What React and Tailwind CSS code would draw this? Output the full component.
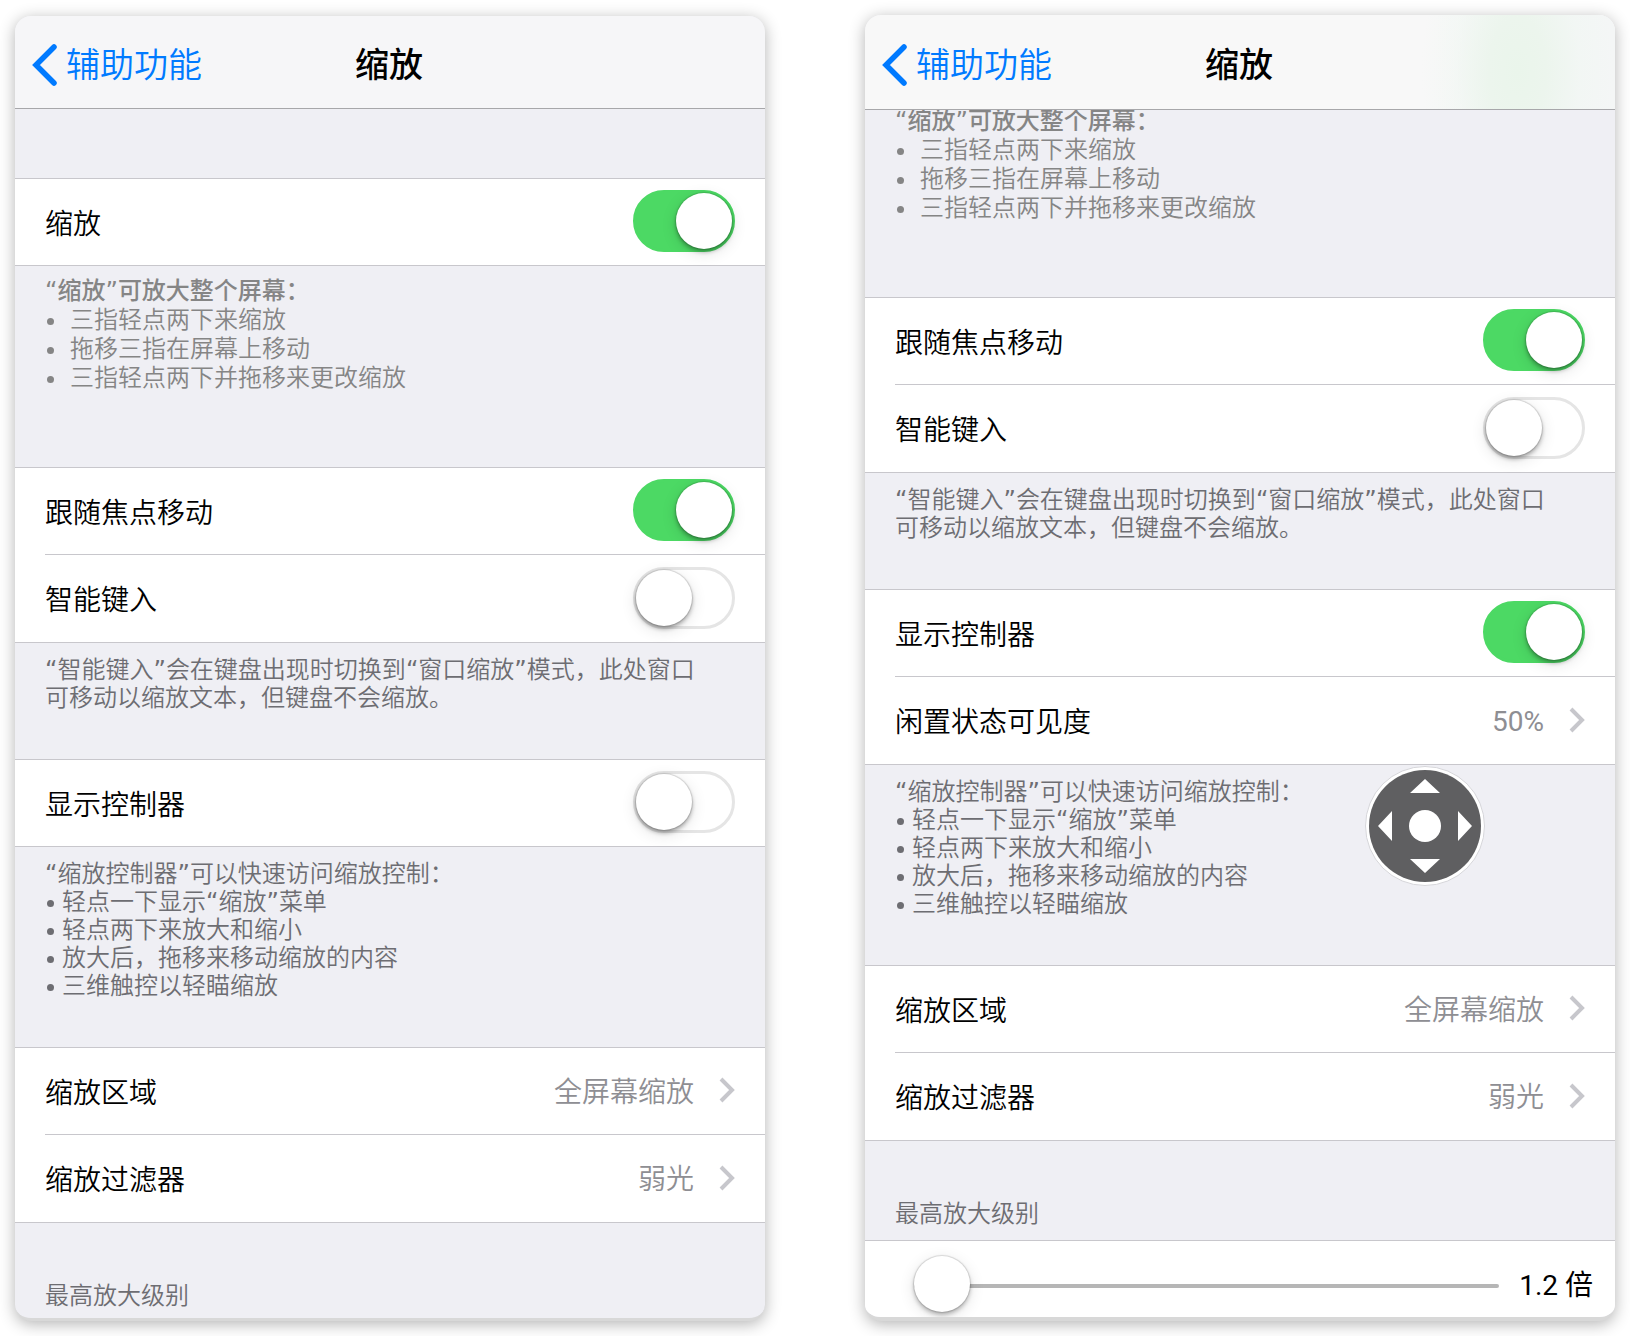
import { useId } from "react";

const FONT = "font-[Inter,'Noto_Sans_CJK_SC',sans-serif] font-[350]";
const NOTE = "font-['DejaVu_Sans','Noto_Sans_CJK_SC',sans-serif] text-[24px] ";

function NavBar({ title, back, tinted }) {
  return (
    <header
      className={
        "relative z-10 grid grid-cols-[1fr_auto_1fr] items-center border-b border-[#a7a7aa] pl-[17px] pr-[19px] pt-[5px] " +
        (tinted
          ? "h-[95px] bg-[#f8f8f8] bg-[radial-gradient(ellipse_96px_180px_at_87%_60%,#eaf5eb_0%,#ecf5ed_30%,rgba(240,247,242,0.5)_65%,rgba(246,248,247,0)_100%),linear-gradient(90deg,rgba(244,246,246,0)_76%,#f4f6f6_92%)]"
          : "h-[93px] bg-[#f6f6f8]")
      }
    >
      <a href="#back" className="flex items-center gap-2 text-[34px] leading-[48px] text-[#007aff]">
        <svg width="26" height="42" viewBox="0 0 26 42" fill="none" aria-hidden="true">
          <path d="M22 3L4 21L22 39" stroke="currentColor" strokeWidth="5.5" strokeLinecap="round" />
        </svg>
        {back}
      </a>
      <h1 className="text-[34px] font-medium leading-[48px] text-black">{title}</h1>
    </header>
  );
}

function Group({ children }) {
  return <div className="border-y border-[#c8c7cc] bg-white pl-[30px]">{children}</div>;
}

const ROW = "flex w-full items-center justify-between pr-[30px] text-left text-[28px] leading-10 text-black ";
const FIRST = "h-[86px]";
const NEXT = "h-[88px] border-t border-[#c8c7cc]";

function SwitchRow({ label, on, next }) {
  const id = useId();
  return (
    <div className={ROW + (next ? NEXT : FIRST)}>
      <label htmlFor={id} className="pt-[3px]">
        {label}
      </label>
      <input
        id={id}
        type="checkbox"
        role="switch"
        defaultChecked={on}
        className="mb-0.5 h-[62px] w-[102px] shrink-0 appearance-none rounded-full border-[3px] border-[#e5e5e5] bg-white before:block before:size-14 before:rounded-full before:bg-white before:shadow-[0_3px_4px_rgba(0,0,0,0.3),0_4px_16px_rgba(0,0,0,0.12),0_0_1px_1px_rgba(0,0,0,0.12)] before:content-[''] checked:border-[#4cd964] checked:bg-[#4cd964] checked:before:ml-10"
      />
    </div>
  );
}

function LinkRow({ label, value, next }) {
  return (
    <button type="button" className={ROW + (next ? NEXT : FIRST)}>
      <span className="pt-[3px]">{label}</span>
      <span className="flex items-center gap-6 font-[Roboto,'Noto_Sans_CJK_SC',sans-serif] text-[#8e8e93]">
        <span className={"pt-[3px] " + (/^\d/.test(value) ? "font-normal" : "")}>{value}</span>
        <svg width="17" height="28" viewBox="0 0 17 28" fill="none" className="mb-0.5" aria-hidden="true">
          <path d="M3 3L14 14L3 25" stroke="#c7c7cc" strokeWidth="4" />
        </svg>
      </span>
    </button>
  );
}

function Quoted({ children }) {
  return (
    <>
      <span className="font-normal">“</span>
      {children}
      <span className="font-normal">”</span>
    </>
  );
}

function BulletList({ items, gap }) {
  return (
    <ul>
      {items.map((item, i) => (
        <li key={i} className={"flex items-center " + gap}>
          <span className="ml-0.5 mt-0.5 size-[7px] rounded-full bg-current" />
          <span>{item}</span>
        </li>
      ))}
    </ul>
  );
}

function ZoomHelp() {
  return (
    <div className={NOTE + "px-[30px] pb-[74px] pt-[11px] leading-[29px] text-[#858585]"}>
      <p className="font-medium">
        <Quoted>缩放</Quoted>可放大整个屏幕：
      </p>
      <BulletList
        gap="gap-4"
        items={["三指轻点两下来缩放", "拖移三指在屏幕上移动", "三指轻点两下并拖移来更改缩放"]}
      />
    </div>
  );
}

function TypingHelp() {
  return (
    <p className={NOTE + "pb-[47px] pl-[30px] pr-12 pt-[13px] leading-7 text-[#6d6d72]"}>
      <Quoted>智能键入</Quoted>会在键盘出现时切换到<Quoted>窗口缩放</Quoted>
      模式，此处窗口可移动以缩放文本，但键盘不会缩放。
    </p>
  );
}

function ControllerHelp({ children }) {
  return (
    <div className={NOTE + "relative px-[30px] pb-[47px] pt-[13px] leading-7 text-[#6d6d72]"}>
      <p>
        <Quoted>缩放控制器</Quoted>可以快速访问缩放控制：
      </p>
      <BulletList
        gap="gap-2"
        items={[
          <>
            轻点一下显示<Quoted>缩放</Quoted>菜单
          </>,
          "轻点两下来放大和缩小",
          "放大后，拖移来移动缩放的内容",
          "三维触控以轻瞄缩放",
        ]}
      />
      {children}
    </div>
  );
}

function ZoomController() {
  return (
    <button type="button" aria-label="缩放控制器" className="absolute right-[130px] top-px size-[120px]">
      <svg width="120" height="120" viewBox="-60 -60 120 120" aria-hidden="true">
        <circle r="59.5" fill="#fff" stroke="#d6d6da" />
        <circle r="56" fill="#5f5f61" />
        <circle r="16" fill="#fff" />
        <path
          fill="#fff"
          d="M0 -47L15 -33H-15ZM0 47L15 33H-15ZM-47 0L-33 -15V15ZM47 0L33 -15V15Z"
        />
      </svg>
    </button>
  );
}

function SectionLabel({ children }) {
  return <h2 className={NOTE + "px-[30px] pt-[59px] leading-7 text-[#6d6d72]"}>{children}</h2>;
}

const CARD =
  "min-w-0 flex-1 overflow-hidden rounded-2xl border-[#d8d8d8] bg-[#efeff4] shadow-[0_3px_16px_rgba(0,0,0,0.3)] ";

export default function App() {
  return (
    <main className={"flex items-start gap-[100px] bg-white px-[15px] pb-4 pt-[15px] " + FONT}>
      <section className={CARD + "mt-px border-b-[3px] pb-2"}>
        <NavBar title="缩放" back="辅助功能" />
        <div className="pt-[69px]">
          <Group>
            <SwitchRow label="缩放" on />
          </Group>
          <ZoomHelp />
          <Group>
            <SwitchRow label="跟随焦点移动" on />
            <SwitchRow label="智能键入" next />
          </Group>
          <TypingHelp />
          <Group>
            <SwitchRow label="显示控制器" />
          </Group>
          <ControllerHelp />
          <Group>
            <LinkRow label="缩放区域" value="全屏幕缩放" />
            <LinkRow label="缩放过滤器" value="弱光" next />
          </Group>
          <SectionLabel>最高放大级别</SectionLabel>
        </div>
      </section>

      <section className={CARD + "border-b-4"}>
        <NavBar title="缩放" back="辅助功能" tinted />
        <div className="-mt-3.5">
          <ZoomHelp />
          <Group>
            <SwitchRow label="跟随焦点移动" on />
            <SwitchRow label="智能键入" next />
          </Group>
          <TypingHelp />
          <Group>
            <SwitchRow label="显示控制器" on />
            <LinkRow label="闲置状态可见度" value="50%" next />
          </Group>
          <ControllerHelp>
            <ZoomController />
          </ControllerHelp>
          <Group>
            <LinkRow label="缩放区域" value="全屏幕缩放" />
            <LinkRow label="缩放过滤器" value="弱光" next />
          </Group>
          <SectionLabel>最高放大级别</SectionLabel>
          <div className="mt-3 flex h-[77px] items-center gap-5 overflow-hidden border-t border-[#c8c7cc] bg-white pl-[49px] pr-[22px] pt-3.5">
            <input
              type="range"
              min="1.2"
              max="15"
              step="0.1"
              defaultValue="1.2"
              aria-label="最高放大级别"
              className="h-14 min-w-0 flex-1 appearance-none bg-transparent [&::-webkit-slider-runnable-track]:h-1 [&::-webkit-slider-runnable-track]:rounded-full [&::-webkit-slider-runnable-track]:bg-[#b6b6b6] [&::-webkit-slider-thumb]:-mt-7 [&::-webkit-slider-thumb]:size-14 [&::-webkit-slider-thumb]:appearance-none [&::-webkit-slider-thumb]:rounded-full [&::-webkit-slider-thumb]:bg-white [&::-webkit-slider-thumb]:shadow-[0_3px_4px_rgba(0,0,0,0.25),0_4px_16px_rgba(0,0,0,0.12),0_0_1px_1px_rgba(0,0,0,0.12)]"
            />
            <output className="font-[Roboto,'Noto_Sans_CJK_SC',sans-serif] text-[28px] font-normal leading-10 text-black">
              1.2 倍
            </output>
          </div>
        </div>
      </section>
    </main>
  );
}
